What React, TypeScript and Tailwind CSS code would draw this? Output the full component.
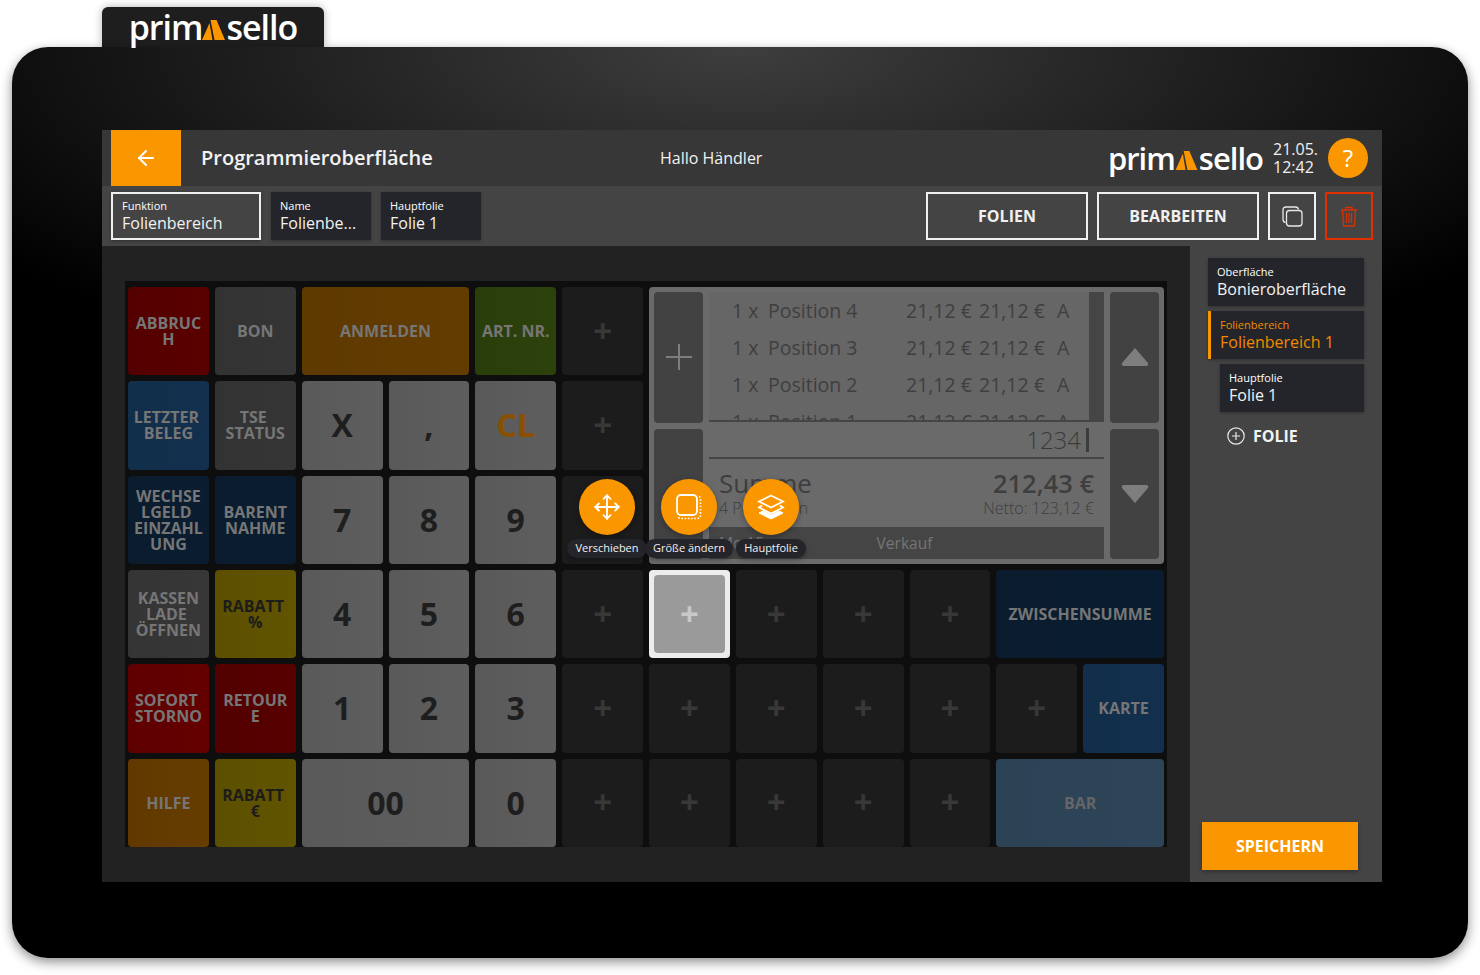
import { ArrowLeft, Move } from "lucide-react";

type TileData = {
    label: string;
    bg: string;
    text?: string;
    big?: boolean;
    span?: string;
};

const dim = "text-[#767676]";
const num = "bg-[#5e5e5e]";

const tiles: TileData[] = [
    // row 1
    { label: "ABBRUC\nH", bg: "bg-[#590000]" },
    { label: "BON", bg: "bg-[#353535]" },
    { label: "ANMELDEN", bg: "bg-[#633c00]", span: "col-span-2" },
    { label: "ART. NR.", bg: "bg-[#2c410b]" },
    { label: "+", bg: "" },
    // row 2
    { label: "LETZTER\u00A0\nBELEG", bg: "bg-[#12304e]" },
    { label: "TSE\u00A0\nSTATUS", bg: "bg-[#353535]" },
    { label: "X", bg: num, big: true },
    { label: ",", bg: num, big: true },
    { label: "CL", bg: num, big: true, text: "text-[#8a5000]" },
    { label: "+", bg: "" },
    // row 3
    { label: "WECHSE\nLGELD\u00A0\nEINZAHL\nUNG", bg: "bg-[#0a1d30]" },
    { label: "BARENT\nNAHME", bg: "bg-[#0a1d30]" },
    { label: "7", bg: num, big: true },
    { label: "8", bg: num, big: true },
    { label: "9", bg: num, big: true },
    { label: "+", bg: "" },
    // row 4
    { label: "KASSEN\nLADE\u00A0\nÖFFNEN", bg: "bg-[#373737]" },
    { label: "RABATT\u00A0\n%", bg: "bg-[#615400]", text: "text-[#1c1c1c]" },
    { label: "4", bg: num, big: true },
    { label: "5", bg: num, big: true },
    { label: "6", bg: num, big: true },
    { label: "+", bg: "" },
    { label: "selected", bg: "" },
    { label: "+", bg: "" },
    { label: "+", bg: "" },
    { label: "+", bg: "" },
    { label: "ZWISCHENSUMME", bg: "bg-[#0a1d30]", span: "col-span-2" },
    // row 5
    { label: "SOFORT\u00A0\nSTORNO", bg: "bg-[#640000]" },
    { label: "RETOUR\nE", bg: "bg-[#570000]" },
    { label: "1", bg: num, big: true },
    { label: "2", bg: num, big: true },
    { label: "3", bg: num, big: true },
    { label: "+", bg: "" },
    { label: "+", bg: "" },
    { label: "+", bg: "" },
    { label: "+", bg: "" },
    { label: "+", bg: "" },
    { label: "+", bg: "" },
    { label: "KARTE", bg: "bg-[#12304e]" },
    // row 6
    { label: "HILFE", bg: "bg-[#663c00]" },
    { label: "RABATT\u00A0\n€", bg: "bg-[#615400]", text: "text-[#1c1c1c]" },
    { label: "00", bg: num, big: true, span: "col-span-2" },
    { label: "0", bg: num, big: true },
    { label: "+", bg: "" },
    { label: "+", bg: "" },
    { label: "+", bg: "" },
    { label: "+", bg: "" },
    { label: "+", bg: "" },
    { label: "BAR", bg: "bg-[#2e4559]", text: "text-[#666666]", span: "col-span-2" },
];

function Logo({ size, mark }: { size: string; mark: string }) {
    return (
        <div className={`flex items-center font-semibold leading-none tracking-[-1px] text-white ${size}`}>
            <span>prim</span>
            <svg viewBox="0 0 24 20" className={`${mark} shrink-0`}>
                <polygon points="0,20 7.5,3 10.5,20" fill="#fa9600" />
                <polygon points="8.5,0 14.5,0 23,20 12.5,20" fill="#fa9600" />
            </svg>
            <span>sello</span>
        </div>
    );
}

function Tile({ tile }: { tile: TileData }) {
    if (tile.label === "+") {
        return (
            <div className="flex items-center justify-center rounded-[4px] bg-[#1c1c1c] pb-[2px] text-[33px] font-bold leading-none text-[#383838]">
                +
            </div>
        );
    }
    if (tile.label === "selected") {
        return (
            <div className="flex rounded-[4px] bg-[#ececec] p-[5px]">
                <div className="flex flex-1 items-center justify-center rounded-[4px] bg-[#9a9a9a] pb-[2px] text-[33px] font-bold leading-none text-[#c8c8c8]">
                    +
                </div>
            </div>
        );
    }
    return (
        <div
            className={`flex items-center justify-center overflow-hidden whitespace-pre-line rounded-[4px] bg-[linear-gradient(90deg,rgba(0,0,0,0.05),rgba(0,0,0,0))] text-center font-bold ${tile.bg} ${tile.span ?? ""} ${
                tile.big ? "text-[32px] text-[#1e1e1e]" : "text-[16px] leading-[16px]"
            } ${tile.text ?? (tile.big ? "" : dim)}`}
        >
            {tile.label}
        </div>
    );
}

function InfoBox({ label, value, className }: { label: string; value: string; className: string }) {
    return (
        <div className={`flex h-12 flex-col justify-center shadow-[0_1px_3px_rgba(0,0,0,0.3)] ${className}`}>
            <span className="text-[11px] leading-[14px] text-white">{label}</span>
            <span className="text-[16px] leading-[20px] text-[#f2f2f2]">{value}</span>
        </div>
    );
}

function Tool({ left, label, children }: { left: string; label: string; children: React.ReactNode }) {
    return (
        <div className={`absolute top-[198px] flex w-[100px] flex-col items-center gap-1 ${left}`}>
            <div className="flex h-14 w-14 items-center justify-center rounded-full bg-[#fa9600] text-white shadow-[0_2px_6px_rgba(0,0,0,0.3)]">
                {children}
            </div>
            <div className="flex h-[19px] items-center whitespace-nowrap rounded-full bg-[#24252b] px-2 text-[11px] font-medium text-[#f0f0f0] shadow-[0_2px_4px_rgba(0,0,0,0.3)]">
                {label}
            </div>
        </div>
    );
}

function ReceiptRow({ pos }: { pos: number }) {
    return (
        <div className="flex h-[37px] shrink-0 items-center pl-[23px] text-[19.5px] text-[#3f3f3f]">
            <span className="w-[36px]">1 x</span>
            <span className="w-[138px]">Position {pos}</span>
            <span className="w-[73px]">21,12 €</span>
            <span className="w-[78px]">21,12 €</span>
            <span>A</span>
        </div>
    );
}

function ReceiptPanel() {
    return (
        <div className="col-span-6 row-span-3 flex gap-[6px] rounded-[4px] bg-[#6a6a6a] p-[5px]">
            <div className="flex w-[49px] flex-col gap-[6px]">
                <div className="flex flex-1 items-center justify-center rounded-[4px] bg-[#424242]">
                    <svg width="26" height="26" viewBox="0 0 26 26" stroke="#7e7e7e" strokeWidth="2">
                        <path d="M13 0v26M0 13h26" />
                    </svg>
                </div>
                <div className="flex-1 rounded-[4px] bg-[#424242]" />
            </div>
            <div className="flex flex-1 flex-col">
                <div className="flex h-[128px] overflow-hidden bg-[#666666]">
                    <div className="flex flex-1 flex-col">
                        {[4, 3, 2, 1].map((pos) => (
                            <ReceiptRow key={pos} pos={pos} />
                        ))}
                    </div>
                    <div className="w-[15px] bg-[#454545]" />
                </div>
                <div className="h-[2px] bg-[#454545]" />
                <div className="flex h-[35px] items-center justify-end gap-[5px] pr-[15px] text-[24px] font-light text-[#3a3a3a]">
                    1234
                    <span className="h-[24px] w-[3px] bg-[#3c3c3c]" />
                </div>
                <div className="h-[2px] bg-[#454545]" />
                <div className="flex h-[68px] items-start justify-between px-[10px] pt-[7px] text-[#3e3e3e]">
                    <div className="flex flex-col">
                        <span className="text-[26px] font-medium leading-[34px]">Summe</span>
                        <span className="text-[16px] font-light leading-[16px]">4 Positionen</span>
                    </div>
                    <div className="flex flex-col items-end">
                        <span className="text-[25.5px] font-semibold leading-[34px]">212,43 €</span>
                        <span className="text-[16px] font-light leading-[16px]">Netto: 123,12 €</span>
                    </div>
                </div>
                <div className="relative flex h-[32px] items-center justify-center bg-[#454545] pr-[4px] pt-[1px] text-[15.5px] text-[#757575]">
                    <span className="absolute left-[10px]">Mo 15</span>
                    Verkauf
                </div>
            </div>
            <div className="flex w-[49px] flex-col gap-[6px]">
                <div className="flex flex-1 items-center justify-center rounded-[4px] bg-[#424242]">
                    <svg width="28" height="18" viewBox="0 0 28 18" fill="#7e7e7e">
                        <path d="M14 0 L27 15 Q28 18 25 18 H3 Q0 18 1 15 Z" />
                    </svg>
                </div>
                <div className="flex flex-1 items-center justify-center rounded-[4px] bg-[#424242]">
                    <svg width="28" height="18" viewBox="0 0 28 18" fill="#7e7e7e">
                        <path d="M14 18 L27 3 Q28 0 25 0 H3 Q0 0 1 3 Z" />
                    </svg>
                </div>
            </div>
        </div>
    );
}

export default function App() {
    return (
        <div className="h-[975px] w-[1480px] overflow-hidden bg-white pt-[7px] font-['Open_Sans',sans-serif]">
            {/* Logo tab */}
            <div className="ml-[102px] flex h-[40px] w-[222px] items-center justify-center rounded-t-[6px] bg-[#1e1e1e] shadow-[0_0_8px_rgba(0,0,0,0.3)]">
                <Logo size="text-[34px]" mark="mt-[5px] h-[20px] w-[24px]" />
            </div>

            {/* Tablet */}
            <div className="mx-3 h-[911px] rounded-[36px] bg-black bg-[radial-gradient(ellipse_65%_38%_at_50%_0%,#3e3e3e,#000000)] px-[90px] pt-[83px] shadow-[0_4px_12px_rgba(0,0,0,0.45)]">
                <div className="flex h-[752px] w-[1280px] flex-col">
                    {/* Top bar */}
                    <div className="relative flex h-[56px] items-center bg-[#373737] pl-[9px] pr-[14px] text-white">
                        <div className="flex h-[56px] w-[70px] items-center justify-center bg-[#fa9600]">
                            <ArrowLeft size={24} strokeWidth={2} className="-mt-[1px]" />
                        </div>
                        <span className="ml-[20px] text-[20px] font-semibold text-[#f2f2f2]">Programmieroberfläche</span>
                        <span className="absolute left-[558px] text-[16px] font-medium text-[#f2f2f2]">Hallo Händler</span>
                        <div className="ml-auto flex items-center">
                            <Logo size="text-[31px]" mark="mt-[5px] h-[19px] w-[24px]" />
                            <div className="ml-[10px] flex flex-col text-[16px] leading-[18px] text-[#f0f0f0]">
                                <span>21.05.</span>
                                <span>12:42</span>
                            </div>
                            <div className="ml-[10px] flex h-10 w-10 items-center justify-center rounded-full bg-[#fa9600] text-[24px] text-white">
                                ?
                            </div>
                        </div>
                    </div>

                    {/* Action bar */}
                    <div className="flex h-[60px] items-center gap-[10px] bg-[#444444] pl-[9px] pr-[9px] shadow-[0_2px_4px_rgba(0,0,0,0.25)]">
                        <InfoBox label="Funktion" value="Folienbereich" className="w-[150px] border-2 border-[#f0f0f0] px-[9px]" />
                        <InfoBox label="Name" value="Folienbe..." className="w-[100px] bg-[#24252a] px-[9px]" />
                        <InfoBox label="Hauptfolie" value="Folie 1" className="w-[100px] bg-[#24252a] px-[9px]" />
                        <button className="ml-auto flex h-12 w-[162px] items-center justify-center border-2 border-[#f0f0f0] text-[16px] font-bold text-[#f0f0f0]">
                            FOLIEN
                        </button>
                        <button className="-ml-[1px] flex h-12 w-[162px] items-center justify-center border-2 border-[#f0f0f0] text-[16px] font-bold text-[#f0f0f0]">
                            BEARBEITEN
                        </button>
                        <button className="-ml-[1px] flex h-12 w-12 items-center justify-center border-2 border-[#f0f0f0]">
                            <svg width="21" height="21" viewBox="0 0 21 21" fill="none" stroke="#e8e8e8" strokeWidth="1.3">
                                <path d="M3.5 16.5 Q1 16 1 13.5 V4 Q1 1 4 1 H13.5 Q16 1 16.5 3.5" />
                                <rect x="4.5" y="4.5" width="15.5" height="15.5" rx="3" />
                            </svg>
                        </button>
                        <button className="-ml-[1px] flex h-12 w-12 items-center justify-center border-2 border-[#e03000]">
                            <svg width="18" height="21" viewBox="0 0 18 21" fill="none" stroke="#d83000" strokeWidth="1.3">
                                <path d="M1 4h16M6 4V1.5h6V4M2.5 4l1 15.5Q3.6 20 4.5 20h9q.9 0 1-.5l1-15.5M6.5 7v10M9 7v10M11.5 7v10" />
                            </svg>
                        </button>
                    </div>

                    <div className="flex flex-1">
                        {/* Grid of keys */}
                        <div className="w-[1088px] bg-[#222222] pl-[23px] pt-[35px]">
                            <div className="relative h-[566px] w-[1042px] bg-[#0e0e0e] px-[3px] pt-[6px]">
                                <div className="grid h-[560px] grid-cols-12 grid-rows-6 gap-[6px]">
                                    {tiles.slice(0, 5).map((tile, i) => (
                                        <Tile key={i} tile={tile} />
                                    ))}
                                    <ReceiptPanel />
                                    {tiles.slice(5).map((tile, i) => (
                                        <Tile key={i} tile={tile} />
                                    ))}
                                </div>

                                {/* Floating actions for the selected key */}
                                <Tool left="left-[432px]" label="Verschieben">
                                    <Move size={28} strokeWidth={1.6} />
                                </Tool>
                                <Tool left="left-[514px]" label="Größe ändern">
                                    <svg width="26" height="26" viewBox="0 0 26 26" fill="none" stroke="white">
                                        <rect x="1" y="1" width="20" height="20" rx="4" strokeWidth="1.8" />
                                        <path d="M23 2.5 Q24.5 3 24.5 5 V21 Q24.5 24.5 21 24.5 H5 Q3 24.5 2.5 23" strokeWidth="1.6" strokeDasharray="1.6 1.6" />
                                    </svg>
                                </Tool>
                                <Tool left="left-[596px]" label="Hauptfolie">
                                    <svg width="28" height="26" viewBox="0 0 28 26" fill="none" stroke="white" strokeWidth="1.7">
                                        <path d="M14 1.5 L26 7.5 L14 13.5 L2 7.5 Z" />
                                        <path d="M5 11.5 L2 13.5 L14 19.5 L26 13.5 L23 11.5" />
                                        <path d="M6 17 L2 19 L14 25 L26 19 L22 17 L14 21 Z" fill="white" strokeWidth="1" />
                                    </svg>
                                </Tool>
                            </div>
                        </div>

                        {/* Sidebar */}
                        <div className="flex w-[192px] flex-col bg-[#444444] pt-[12px]">
                            <div className="ml-[18px] flex w-[156px] flex-col gap-[5px]">
                                <InfoBox label="Oberfläche" value="Bonieroberfläche" className="bg-[#24252a] px-[9px]" />
                                <div className="flex h-12 flex-col justify-center border-l-[3px] border-[#fa9600] bg-[#24252a] pl-[9px] shadow-[0_1px_3px_rgba(0,0,0,0.3)]">
                                    <span className="text-[11px] leading-[14px] text-[#f08a00]">Folienbereich</span>
                                    <span className="text-[16px] leading-[20px] text-[#f08a00]">Folienbereich 1</span>
                                </div>
                                <InfoBox label="Hauptfolie" value="Folie 1" className="ml-[12px] bg-[#24252a] px-[9px]" />
                            </div>
                            <div className="ml-[37px] mt-[12px] flex items-center gap-[8px] text-[16px] font-bold text-[#f2f2f2]">
                                <svg width="18" height="18" viewBox="0 0 18 18" fill="none" stroke="#e8e8e8" strokeWidth="1.2">
                                    <circle cx="9" cy="9" r="8.2" />
                                    <path d="M9 5v8M5 9h8" />
                                </svg>
                                FOLIE
                            </div>
                            <button className="mb-[12px] ml-[12px] mt-auto flex h-12 w-[156px] items-center justify-center bg-[#fa9600] text-[16px] font-bold text-white shadow-[0_2px_4px_rgba(0,0,0,0.3)]">
                                SPEICHERN
                            </button>
                        </div>
                    </div>
                </div>
            </div>
        </div>
    );
}
